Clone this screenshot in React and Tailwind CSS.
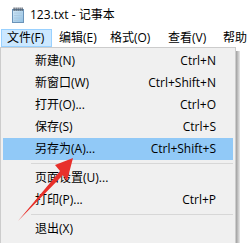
import React from "react";

const font = { fontFamily: '"Open Sans", "Noto Sans CJK SC", sans-serif' };

const menus = [
  { label: "文件(F)", w: "w-[51px]", active: true },
  { label: "编辑(E)", w: "w-[51px]" },
  { label: "格式(O)", w: "w-[58px]" },
  { label: "查看(V)", w: "w-[55px]" },
  { label: "帮助", w: "w-[40px]" },
];

const items = [
  { label: "新建(N)", key: "Ctrl+N" },
  { label: "新窗口(W)", key: "Ctrl+Shift+N" },
  { label: "打开(O)...", key: "Ctrl+O" },
  { label: "保存(S)", key: "Ctrl+S" },
  { label: "另存为(A)...", key: "Ctrl+Shift+S", hover: true },
  { sep: true },
  { label: "页面设置(U)...", key: "" },
  { label: "打印(P)...", key: "Ctrl+P" },
  { sep: true },
  { label: "退出(X)", key: "" },
];

function NoteIcon() {
  return (
    <svg width="14" height="16" viewBox="0 0 14 16">
      <defs>
        <linearGradient id="pg" x1="0" y1="0" x2="1" y2="1">
          <stop offset="0" stopColor="#d7ebf8" />
          <stop offset="1" stopColor="#8fbfe3" />
        </linearGradient>
      </defs>
      <rect x="1.5" y="2.5" width="11" height="13" fill="url(#pg)" stroke="#6b93b8" />
      <path d="M3 6h8M3 8.5h8M3 11h8M3 13.5h6" stroke="#a9c6dd" strokeWidth="0.8" />
      {[3, 5, 7, 9, 11].map((x) => (
        <rect key={x} x={x - 0.5} y="0.5" width="1.2" height="3.5" fill="#4a5563" />
      ))}
    </svg>
  );
}

export default function App() {
  return (
    <div className="relative w-[247px] h-[243px] overflow-hidden bg-white text-[12px] text-black" style={font}>
      <div className="h-[29px] flex items-center pl-[11px]">
        <NoteIcon />
        <span className="ml-[5px] leading-none">123.txt - 记事本</span>
      </div>

      <div className="h-[18px] flex pl-[1px]">
        {menus.map((m) => (
          <div
            key={m.label}
            className={`${m.w} shrink-0 flex items-center leading-none whitespace-nowrap ${
              m.active ? "bg-[#cce8ff] border border-[#99d1ff] pl-[5px]" : "pl-[7px]"
            }`}
          >
            {m.label}
          </div>
        ))}
      </div>

      <div className="flex">
        <div className="w-[236px] h-[200px] bg-[#f0f0f0] border border-[#cccccc] p-[2px] shrink-0">
          {items.map((it, i) =>
            it.sep ? (
              <div key={i} className="h-[7px] flex items-center pl-[28px]">
                <div className="h-px w-full bg-[#d7d7d7]" />
              </div>
            ) : (
              <div
                key={i}
                className={`h-[22px] flex items-center justify-between pl-[32px] pr-[17px] leading-none whitespace-nowrap ${
                  it.hover ? "bg-[#91c9f7]" : ""
                }`}
              >
                <span>{it.label}</span>
                <span>{it.key}</span>
              </div>
            )
          )}
        </div>
        <div className="w-[4px] h-[200px] mt-[4px] bg-gradient-to-r from-[#a0a0a0] to-[#e8e8e8]" />
      </div>

      <svg className="absolute left-0 top-0 pointer-events-none" width="247" height="243">
        <polygon
          points="73,158 55,165 60,171 18,221 63,175 67,181"
          fill="#e8302b"
        />
      </svg>
    </div>
  );
}
